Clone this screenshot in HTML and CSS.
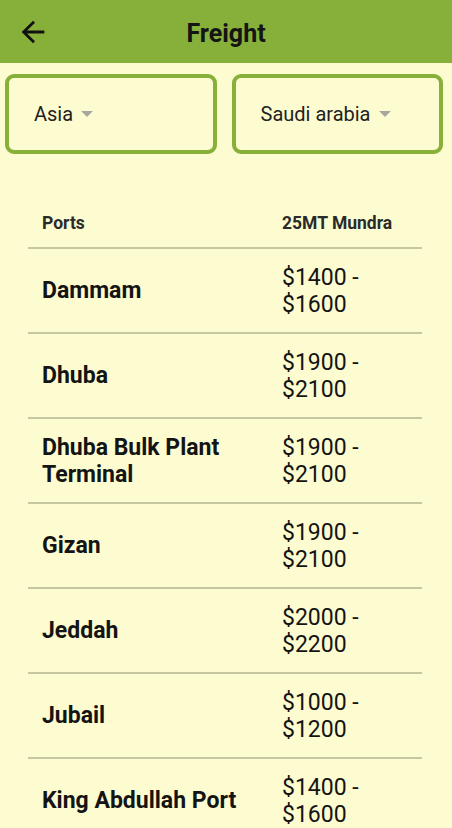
FILE: index.html
```html
<!DOCTYPE html>
<html>
<head>
<meta charset="utf-8">
<link rel="stylesheet" href="styles.css">
</head>
<body>
<header class="appbar">
  <svg class="back" viewBox="0 0 24 24" width="34" height="34"><path d="M20 11H7.83l5.59-5.59L12 4l-8 8 8 8 1.41-1.41L7.83 13H20v-2z" fill="#111"/></svg>
  <h1 class="title">Freight</h1>
</header>
<div class="filters">
  <div class="select"><span>Asia</span><span class="caret"></span></div>
  <div class="select"><span>Saudi arabia</span><span class="caret"></span></div>
</div>
<div class="table">
  <div class="row head"><div class="c1">Ports</div><div class="c2">25MT Mundra</div></div>
  <div class="row"><div class="c1">Dammam</div><div class="c2">$1400 - $1600</div></div>
  <div class="row"><div class="c1">Dhuba</div><div class="c2">$1900 - $2100</div></div>
  <div class="row"><div class="c1">Dhuba Bulk Plant Terminal</div><div class="c2">$1900 - $2100</div></div>
  <div class="row"><div class="c1">Gizan</div><div class="c2">$1900 - $2100</div></div>
  <div class="row"><div class="c1">Jeddah</div><div class="c2">$2000 - $2200</div></div>
  <div class="row"><div class="c1">Jubail</div><div class="c2">$1000 - $1200</div></div>
  <div class="row"><div class="c1">King Abdullah Port</div><div class="c2">$1400 - $1600</div></div>
</div>
</body>
</html>
```
FILE: styles.css
```css
html, body {
  margin: 0;
  padding: 0;
  background: #fdfcd0;
  font-family: Roboto, "Noto Sans", sans-serif;
  color: #141414;
  height: 828px;
  overflow: hidden;
}
.appbar {
  height: 63px;
  background: #86b03a;
  display: flex;
  align-items: center;
  position: relative;
}
.back {
  margin-left: 16px;
  margin-top: 1px;
  display: block;
}
.title {
  position: absolute;
  left: 0;
  right: 0;
  top: 19px;
  text-align: center;
  margin: 0;
  font-size: 25px;
  line-height: 30px;
  font-weight: 700;
  color: #141414;
  pointer-events: none;
}
.filters {
  display: flex;
  gap: 15px;
  padding: 11px 9px 0 5px;
}
.select {
  flex: 1;
  height: 71px;
  box-sizing: content-box;
  border: 4px solid #86b03a;
  border-radius: 9px;
  display: flex;
  align-items: center;
  padding-left: 25px;
  padding-bottom: 1px;
  font-size: 20px;
  color: #222;
}
.caret {
  width: 0;
  height: 0;
  border-left: 6px solid transparent;
  border-right: 6px solid transparent;
  border-top: 6px solid #a8a8a0;
  margin-left: 8px;
  margin-top: 1px;
}
.table {
  margin: 39px 30px 0 28px;
}
.row {
  display: flex;
  align-items: center;
  height: 83px;
  border-bottom: 2px solid #c6c7a0;
}
.row.head {
  box-sizing: border-box;
  height: 56px;
  padding-top: 6px;
  color: #2a2a2a;
}
.c1 {
  width: 212px;
  padding: 0 14px;
  font-size: 23px;
  font-weight: 700;
  line-height: 27px;
}
.c2 {
  flex: 1;
  padding: 0 14px;
  font-size: 23px;
  line-height: 27px;
}
.row.head .c1, .row.head .c2 {
  font-size: 17.5px;
  font-weight: 700;
  line-height: 22px;
}
```
